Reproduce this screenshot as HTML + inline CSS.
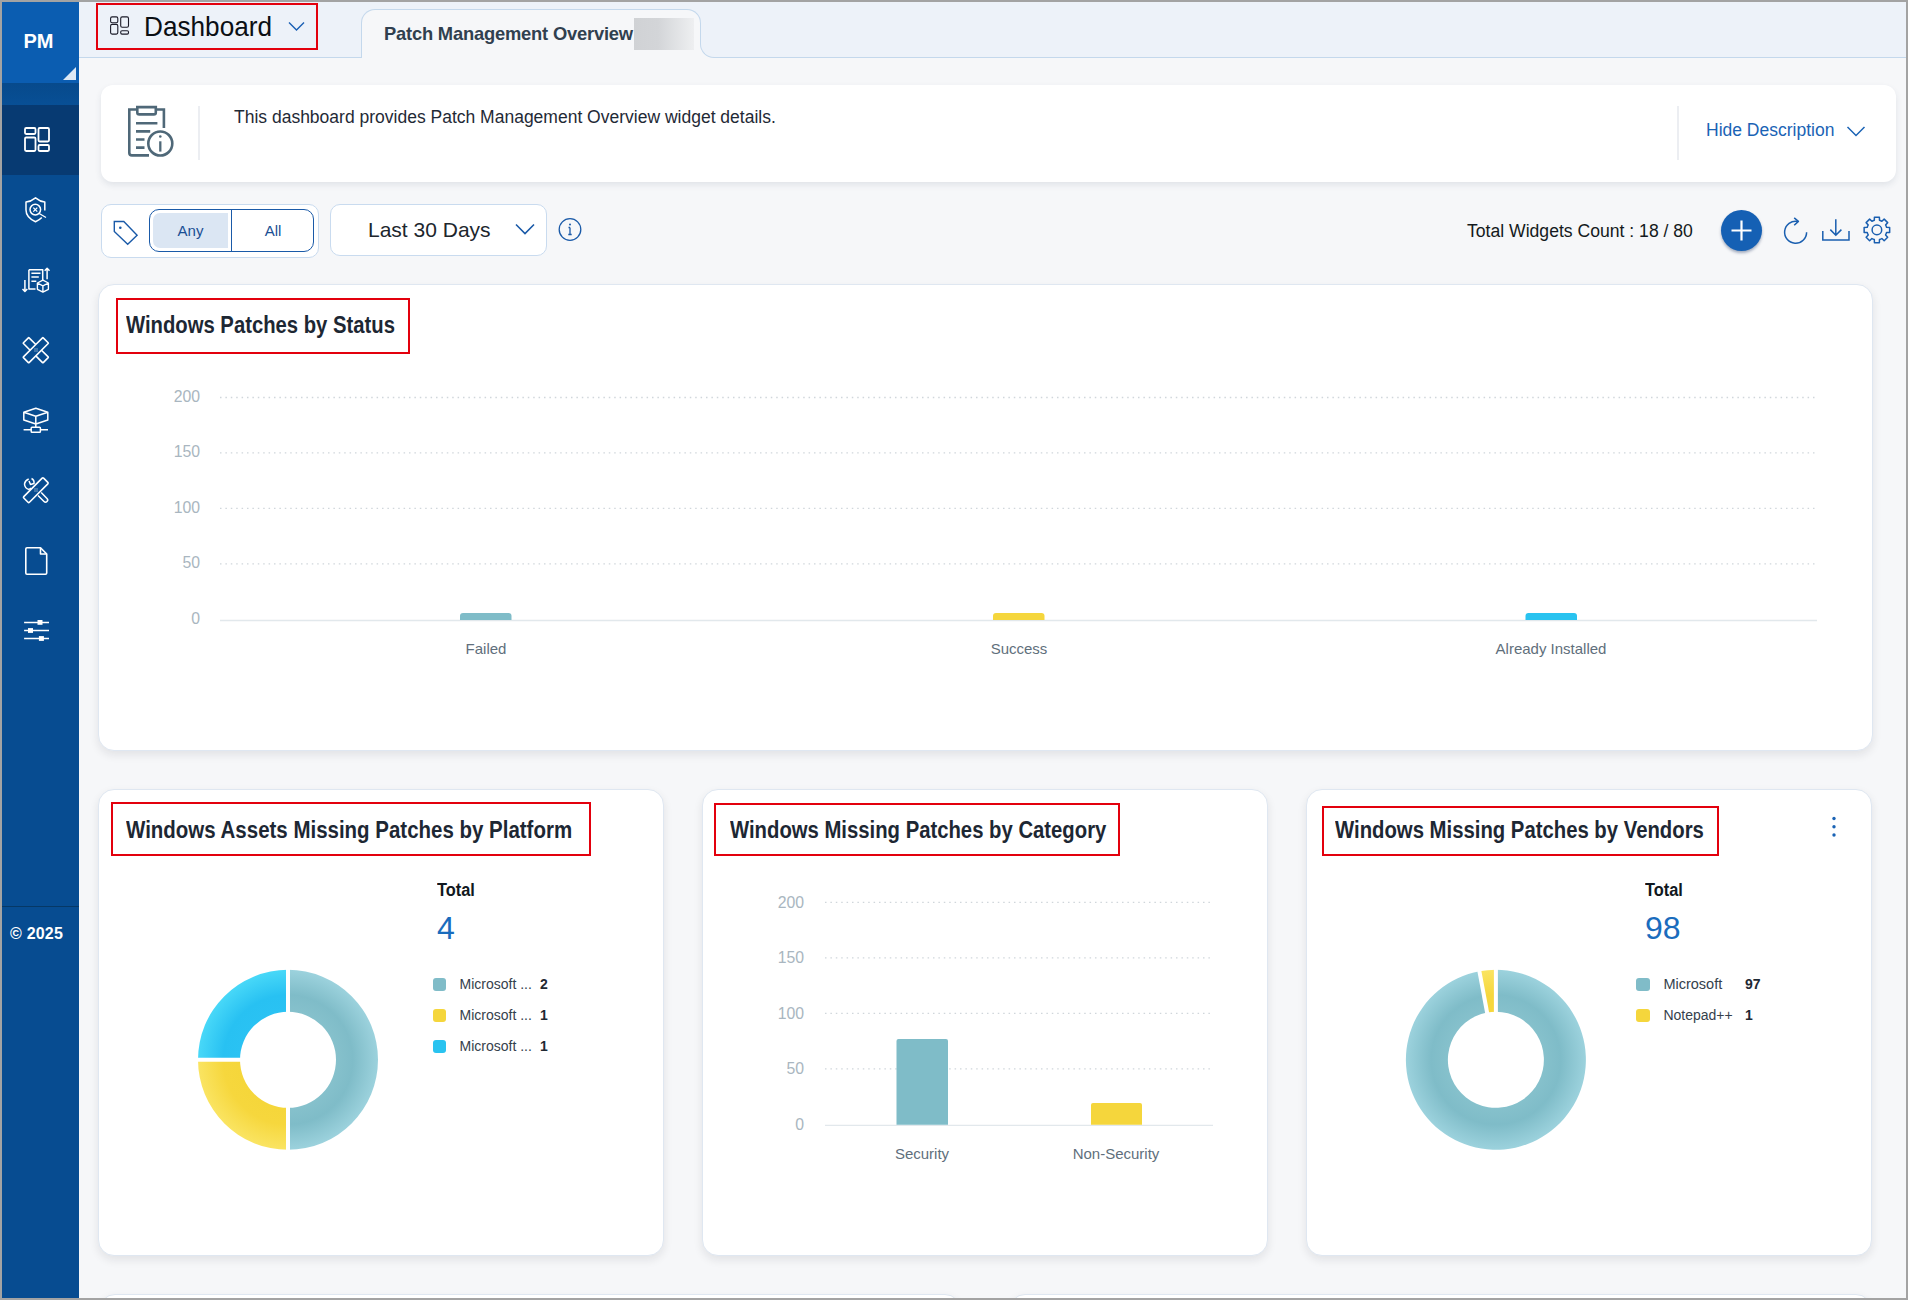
<!DOCTYPE html>
<html><head><meta charset="utf-8">
<style>
*{box-sizing:border-box;margin:0;padding:0}
html,body{width:1908px;height:1300px;overflow:hidden}
body{background:#f6f7f9;font-family:"Liberation Sans",sans-serif;position:relative}
.a{position:absolute}
.bd{position:absolute;background:#a3a3a3;z-index:50}
#side{position:absolute;left:2px;top:2px;width:77px;height:1296px;background:#074c91}
#pm{position:absolute;left:2px;top:2px;width:77px;height:81px;background:#0b5db1;color:#fff;font-weight:bold;font-size:20px;text-align:center;line-height:78px;padding-right:4px}
#pmtri{position:absolute;left:63px;top:67px;width:0;height:0;border-left:13px solid transparent;border-bottom:13px solid #dce8f5}
#grad{position:absolute;left:2px;top:83px;width:77px;height:22px;background:linear-gradient(#074a8c,#084f95)}
#sel{position:absolute;left:2px;top:105px;width:77px;height:70px;background:#073a72}
.sic{position:absolute;left:20px;width:32px;height:32px}
#sdiv{position:absolute;left:2px;top:906px;width:77px;height:1px;background:#063866}
#copy{position:absolute;left:10px;top:925px;color:#fff;font-weight:bold;font-size:16px;letter-spacing:0.2px}
#hdr{position:absolute;left:79px;top:2px;width:1827px;height:56px;background:#edf2f9;border-bottom:1px solid #c4d8ec}
.red{position:absolute;border:2.6px solid #e3000d}
.card{position:absolute;background:#fff;border-radius:16px;border:1px solid #dfe7f1;box-shadow:0 4px 10px rgba(20,25,35,0.09)}
.ttl{position:absolute;font-weight:bold;font-size:23px;transform-origin:0 0;color:#1d2733;white-space:nowrap}
.ylab{position:absolute;font-size:15.8px;color:#a9b6c0;text-align:right;width:40px}
.xlab{position:absolute;font-size:15px;color:#5f6f7c;text-align:center;width:200px}
.lsq{width:13.5px;height:13.5px;border-radius:3px}
.ltx{font-size:14px;color:#35414c;white-space:nowrap}
.lvl{font-size:14px;font-weight:bold;color:#1f2933}
.grid{position:absolute;height:0;border-top:2px dotted #d3d9de}
</style></head>
<body>
  <div id="side"></div>
  <div id="pm">PM</div>
  <div id="pmtri"></div>
  <div id="grad"></div>
  <div id="sel"></div>
  <div id="sdiv"></div>
  <div id="copy">© 2025</div>
  <svg class="a" style="left:0;top:0" width="79" height="680" viewBox="0 0 79 680" fill="none" stroke="#fff" stroke-width="1.8" stroke-linejoin="round">
    <!-- dashboard -->
    <rect x="25" y="128" width="10.5" height="6" rx="1.2"/>
    <rect x="25" y="137.5" width="10.5" height="13.5" rx="1.2"/>
    <rect x="38.5" y="128" width="10.5" height="13.5" rx="1.2"/>
    <rect x="38.5" y="145" width="10.5" height="6" rx="1.2"/>
    <!-- shield -->
    <path d="M44.8 210.5 V202 Q40 201.5 35.5 197.8 Q31 201.5 26 202 V210 Q26 217.5 35.5 221.7 Q39.5 220 41.8 217.5" stroke-width="1.5"/>
    <circle cx="35.3" cy="209.6" r="5.3" stroke-width="1.5"/>
    <path d="M33.3 207.6 L37.3 211.6 M37.3 207.6 L33.3 211.6 M39.2 213.5 L46 217.5" stroke-width="1.3"/>
    <!-- deploy doc -->
    <path d="M28.9 269.8 H42.7 V280 M35.5 289 H28.9 V269.8" stroke-width="1.5"/>
    <path d="M31.4 273.3 H40.5 M31.4 277.1 H38.8 M31.4 281.2 H36.3" stroke-width="1.5"/>
    <path d="M24.9 280 V291.5 M22.5 289 L24.9 291.5 L27.3 289 M47.1 279.3 V268.3 M44.7 270.7 L47.1 268.3 L49.5 270.7" stroke-width="1.5"/>
    <path d="M42.9 280.2 L48.4 283 V289.3 L42.9 292.1 L37.4 289.3 V283 Z M37.4 283 L42.9 285.8 L48.4 283 M42.9 285.8 V292.1" stroke-width="1.4"/>
    <!-- bandage -->
    <g transform="translate(35.8 350.2) rotate(45)">
      <path d="M-4 -4 H-13.5 Q-14 -4 -14 -3.5 V3.5 Q-14 4 -13.5 4 H-4 M4 -4 H13.5 Q14 -4 14 -3.5 V3.5 Q14 4 13.5 4 H4" stroke-width="1.6"/>
      <path d="M-4 -4 V-13.5 Q-4 -14 -3.5 -14 H3.5 Q4 -14 4 -13.5 V13.5 Q4 14 3.5 14 H-3.5 Q-4 14 -4 13.5 Z" stroke-width="1.6"/>
    </g>
    <path d="M34.5 349 h1 M36.5 351 h1 M34.5 351 h1 M36.5 349 h1" stroke-width="0.9"/>
    <!-- cube network -->
    <path d="M35.8 408.3 L47.8 412.3 V420 L35.8 424 L23.8 420 V412.3 Z M23.8 412.3 L35.8 416.3 L47.8 412.3 M35.8 416.3 V427.5" stroke-width="1.5"/>
    <path d="M23.6 429.8 H31.2 M40.4 429.8 H48" stroke-width="1.5"/>
    <rect x="31.2" y="427.3" width="9.2" height="5" rx="0.8" stroke-width="1.5"/>
    <!-- wrench + bandage -->
    <g transform="translate(35.8 490.2) rotate(-45)">
      <rect x="-14" y="-4" width="28" height="8" rx="1" stroke-width="1.6"/>
    </g>
    <path d="M38 495.5 L44 501.5 Q45.5 503 47 501.5 Q48.5 500 47 498.5 L41.2 492.5" stroke-width="1.5"/>
    <path d="M28.7 479 Q25 480.5 24.5 484 Q24.8 488.5 29 489.5 L31 488 M31.5 478.5 Q34.5 480 34 483.5 L30.5 484.5 L29 481" stroke-width="1.5"/>
    <path d="M34.5 489 h1 M36.5 491 h1 M34.5 491 h1 M36.5 489 h1" stroke-width="0.9"/>
    <!-- document -->
    <path d="M40.5 547.8 H27 Q25.8 547.8 25.8 549 V573 Q25.8 574.2 27 574.2 H45.5 Q46.7 574.2 46.7 573 V554 Z" stroke-width="1.6"/>
    <path d="M40.5 547.8 V554 H46.7" stroke-width="1.6"/>
    <!-- sliders -->
    <path d="M24.1 622.4 H49 M24.1 630.5 H49 M24.1 638.5 H49" stroke-width="1.5"/>
    <rect x="37.5" y="620" width="5" height="4.8" fill="#fff" stroke="none"/>
    <rect x="28" y="628.1" width="5" height="4.8" fill="#fff" stroke="none"/>
    <rect x="38.9" y="636.1" width="5" height="4.8" fill="#fff" stroke="none"/>
  </svg>
  <div id="hdr"></div>
  <!-- tab -->
  <div class="a" style="left:361px;top:9px;width:340px;height:49px;background:#f6f7f9;border:1px solid #c4d8ec;border-bottom:none;border-radius:14px 14px 0 0"></div>
  <div class="a" style="left:700px;top:44px;width:14px;height:14px;background:#f6f7f9"></div>
  <div class="a" style="left:700px;top:44px;width:14px;height:14px;background:#edf2f9;border-left:1px solid #c4d8ec;border-bottom:1px solid #c4d8ec;border-bottom-left-radius:14px"></div>
  <div class="a" style="left:362px;top:56px;width:338px;height:2px;background:#f6f7f9"></div>
  <div class="a" style="left:384px;top:23px;font-weight:bold;font-size:19px;letter-spacing:-0.2px;transform:scaleX(0.965);transform-origin:0 0;color:#30404f;white-space:nowrap">Patch Management Overview</div>
  <div class="a" style="left:634px;top:18px;width:60px;height:32px;background:linear-gradient(90deg,#d0d2d5,#d3d5d8 40%,#eeeff1)"></div>
  <!-- dashboard dropdown -->
  <div class="red" style="left:96px;top:3px;width:222px;height:47px"></div>
  <svg class="a" style="left:109px;top:15px" width="22" height="22" viewBox="0 0 22 22" fill="none" stroke="#1b1b28" stroke-width="1.1">
    <rect x="1.6" y="1.9" width="7.2" height="5.9" rx="1.5"/>
    <rect x="1.6" y="9.4" width="7.2" height="9.7" rx="1.5"/>
    <rect x="11.7" y="1.9" width="7.8" height="10.3" rx="1.5"/>
    <rect x="11.7" y="15.7" width="7.8" height="3.4" rx="1.3"/>
  </svg>
  <div class="a" style="left:144px;top:11px;font-size:28px;transform:scaleX(0.935);transform-origin:0 0;color:#0b0f14;white-space:nowrap">Dashboard</div>
  <svg class="a" style="left:288px;top:21px" width="17" height="11" viewBox="0 0 17 11" fill="none" stroke="#1a5fb4" stroke-width="1.4"><path d="M1 1.5 L8.5 9 L16 1.5"/></svg>

  <!-- description card -->
  <div class="a" style="left:101px;top:85px;width:1795px;height:97px;background:#fff;border-radius:12px;box-shadow:0 3px 6px rgba(40,60,90,0.10)"></div>
  <svg class="a" style="left:115px;top:95px" width="70" height="70" viewBox="0 0 70 70" fill="none" stroke="#4f6878" stroke-width="2.6">
    <path d="M21.5 14.5 H14.3 V58 Q14.3 60.4 17 60.4 H34"/>
    <path d="M42 14.5 H48.9 V33"/>
    <path d="M22.3 12.1 H40.8 V17.5 Q40.8 19.4 38.8 19.4 H24.3 Q22.3 19.4 22.3 17.5 Z"/>
    <path d="M21 28.3 H42.4 M21 36.4 H35.2 M21 44.5 H29.5 M21 52.6 H29.5"/>
    <circle cx="45.3" cy="48.5" r="12"/>
    <path d="M45.3 46.3 V56.6" stroke-width="2.3"/>
    <circle cx="45.3" cy="41.5" r="1.3" fill="#4f6878" stroke="none"/>
  </svg>
  <div class="a" style="left:198px;top:106px;width:2px;height:54px;background:#eceef2"></div>
  <div class="a" style="left:234px;top:107px;font-size:17.5px;color:#1f2a36;white-space:nowrap">This dashboard provides Patch Management Overview widget details.</div>
  <div class="a" style="left:1677px;top:106px;width:2px;height:54px;background:#eceef2"></div>
  <div class="a" style="left:1706px;top:120px;font-size:17.5px;color:#1a63b5;white-space:nowrap">Hide Description</div>
  <svg class="a" style="left:1846px;top:125px" width="20" height="13" viewBox="0 0 20 13" fill="none" stroke="#1a63b5" stroke-width="1.5"><path d="M1.5 2 L10 10.5 L18.5 2"/></svg>

  <!-- filter row -->
  <div class="a" style="left:101px;top:204px;width:218px;height:54px;background:#fff;border:1px solid #c9dbef;border-radius:10px"></div>
  <svg class="a" style="left:110px;top:216px" width="30" height="30" viewBox="0 0 30 30" fill="none" stroke="#1a5aa8" stroke-width="1.4" stroke-linejoin="miter">
    <path d="M4.3 5.5 H13.8 L27.1 19.3 L17.7 28.3 L4.3 15.4 Z"/>
    <circle cx="10.3" cy="11.7" r="1.3" fill="#1a5aa8" stroke="none"/>
  </svg>
  <div class="a" style="left:149px;top:209px;width:165px;height:43px;border:1.5px solid #1a5aa8;border-radius:10px;background:#fff"></div>
  <div class="a" style="left:153px;top:213px;width:75px;height:35px;background:#dbe6f3;border-radius:7px 0 0 7px"></div>
  <div class="a" style="left:231px;top:210px;width:1.2px;height:41px;background:#1a5aa8"></div>
  <div class="a" style="left:153px;top:222px;width:75px;text-align:center;font-size:15px;color:#1a4f94">Any</div>
  <div class="a" style="left:232px;top:222px;width:82px;text-align:center;font-size:15px;color:#1a4f94">All</div>
  <div class="a" style="left:330px;top:204px;width:217px;height:52px;background:#fff;border:1px solid #c9dbef;border-radius:10px"></div>
  <div class="a" style="left:368px;top:218px;font-size:21px;color:#20262d;white-space:nowrap">Last 30 Days</div>
  <svg class="a" style="left:514px;top:222px" width="22" height="14" viewBox="0 0 22 14" fill="none" stroke="#1a5aa8" stroke-width="1.6"><path d="M2 2.5 L11 11.5 L20 2.5"/></svg>
  <svg class="a" style="left:557px;top:217px" width="26" height="26" viewBox="0 0 26 26" fill="none" stroke="#1a5aa8" stroke-width="1.3">
    <circle cx="13" cy="12.5" r="10.8"/>
    <path d="M13 10.5 V17.5 M11.3 17.5 H14.7 M11.5 10.5 H13"/>
    <circle cx="13" cy="7.6" r="1" fill="#1a5aa8" stroke="none"/>
  </svg>
  <div class="a" style="left:1467px;top:221px;font-size:17.6px;color:#141a20;white-space:nowrap">Total Widgets Count : 18 / 80</div>
  <div class="a" style="left:1721px;top:210px;width:41px;height:41px;border-radius:50%;background:#1560b4;box-shadow:0 2px 3px rgba(0,30,80,0.35)"></div>
  <svg class="a" style="left:1721px;top:210px" width="41" height="41" viewBox="0 0 41 41" stroke="#fff" stroke-width="2.2"><path d="M20.5 10.5 V30.5 M10.5 20.5 H30.5"/></svg>
  <svg class="a" style="left:1770px;top:205px" width="140" height="50" viewBox="0 0 140 50" fill="none" stroke="#1a5fb0" stroke-width="1.5">
    <path d="M36.6 27.2 A11 11 0 1 1 27.6 16.4"/>
    <path d="M24.2 12.9 L28.4 16.4 L24.2 20.3" stroke-linejoin="round"/>
    <path d="M65.8 14.3 V30.3 M60.3 24.6 L65.8 30.2 L71.4 24.6"/>
    <path d="M52.8 26 V35 H79 V26"/>
    <path d="M104.31 15.24 L104.42 12.14 L109.38 12.14 L109.49 15.24 A10.0 10.0 0 0 1 111.90 16.24 L114.17 14.12 L117.68 17.63 L115.56 19.90 A10.0 10.0 0 0 1 116.56 22.31 L119.66 22.42 L119.66 27.38 L116.56 27.49 A10.0 10.0 0 0 1 115.56 29.90 L117.68 32.17 L114.17 35.68 L111.90 33.56 A10.0 10.0 0 0 1 109.49 34.56 L109.38 37.66 L104.42 37.66 L104.31 34.56 A10.0 10.0 0 0 1 101.90 33.56 L99.63 35.68 L96.12 32.17 L98.24 29.90 A10.0 10.0 0 0 1 97.24 27.49 L94.14 27.38 L94.14 22.42 L97.24 22.31 A10.0 10.0 0 0 1 98.24 19.90 L96.12 17.63 L99.63 14.12 L101.90 16.24 A10.0 10.0 0 0 1 104.31 15.24 Z" stroke-linejoin="round"/>
    <circle cx="106.9" cy="24.9" r="4.8"/>
  </svg>

  <!-- card 1 -->
  <div class="card" style="left:98px;top:284px;width:1775px;height:467px"></div>
  <div class="red" style="left:116px;top:298px;width:294px;height:56px"></div>
  <div class="ttl" style="left:126px;top:312px;transform:scaleX(0.881)">Windows Patches by Status</div>
  <svg class="a" style="left:0;top:0" width="1908" height="760" viewBox="0 0 1908 760">
    <g stroke="#d0d6db" stroke-width="1.3" stroke-dasharray="1.5 3.9">
      <path d="M220 397.5 H1815 M220 452.8 H1815 M220 508.3 H1815 M220 563.8 H1815"/>
    </g>
    <path d="M220 620.5 H1817" stroke="#e2e8ec" stroke-width="1.3"/>
    <path d="M460 620 V616 Q460 613 463 613 H508.5 Q511.5 613 511.5 616 V620 Z" fill="#7fbcc8"/>
    <path d="M993 620 V616 Q993 613 996 613 H1041.5 Q1044.5 613 1044.5 616 V620 Z" fill="#f5d63c"/>
    <path d="M1525.5 620 V616 Q1525.5 613 1528.5 613 H1574 Q1577 613 1577 616 V620 Z" fill="#29c3f0"/>
  </svg>
  <div class="ylab" style="left:160px;top:388px">200</div>
  <div class="ylab" style="left:160px;top:443px">150</div>
  <div class="ylab" style="left:160px;top:499px">100</div>
  <div class="ylab" style="left:160px;top:554px">50</div>
  <div class="ylab" style="left:160px;top:610px">0</div>
  <div class="xlab" style="left:386px;top:640px">Failed</div>
  <div class="xlab" style="left:919px;top:640px">Success</div>
  <div class="xlab" style="left:1451px;top:640px">Already Installed</div>

  <!-- row 2 cards -->
  <div class="card" style="left:98px;top:789px;width:566px;height:467px"></div>
  <div class="card" style="left:702px;top:789px;width:566px;height:467px"></div>
  <div class="card" style="left:1306px;top:789px;width:566px;height:467px"></div>
  <!-- row 3 partial -->
  <div class="card" style="left:99px;top:1294px;width:862px;height:300px"></div>
  <div class="card" style="left:1009px;top:1294px;width:863px;height:300px"></div>

  <div class="red" style="left:111px;top:802px;width:480px;height:54px"></div>
  <div class="ttl" style="left:126px;top:817px;transform:scaleX(0.89)">Windows Assets Missing Patches by Platform</div>
  <div class="red" style="left:714px;top:803px;width:406px;height:53px"></div>
  <div class="ttl" style="left:730px;top:817px;transform:scaleX(0.882)">Windows Missing Patches by Category</div>
  <div class="red" style="left:1322px;top:806px;width:397px;height:50px"></div>
  <div class="ttl" style="left:1335px;top:817px;transform:scaleX(0.883)">Windows Missing Patches by Vendors</div>
  <svg class="a" style="left:1828px;top:814px" width="12" height="26" viewBox="0 0 12 26" fill="#1a63b5"><circle cx="6" cy="4.5" r="1.7"/><circle cx="6" cy="12.8" r="1.7"/><circle cx="6" cy="21" r="1.7"/></svg>

  <!-- category bar chart -->
  <svg class="a" style="left:0;top:880px" width="1908" height="260" viewBox="0 880 1908 260">
    <g stroke="#d0d6db" stroke-width="1.3" stroke-dasharray="1.5 3.9">
      <path d="M825 902.4 H1211 M825 957.9 H1211 M825 1013.4 H1211 M825 1068.9 H1211"/>
    </g>
    <path d="M825 1125.3 H1213" stroke="#e2e8ec" stroke-width="1.3"/>
    <path d="M896.5 1124.8 V1041 Q896.5 1039 898.5 1039 H946 Q948 1039 948 1041 V1124.8 Z" fill="#7fbcc8"/>
    <path d="M1091 1124.8 V1105 Q1091 1103 1093 1103 H1140 Q1142 1103 1142 1105 V1124.8 Z" fill="#f5d63c"/>
  </svg>
  <div class="ylab" style="left:764px;top:894px">200</div>
  <div class="ylab" style="left:764px;top:949px">150</div>
  <div class="ylab" style="left:764px;top:1005px">100</div>
  <div class="ylab" style="left:764px;top:1060px">50</div>
  <div class="ylab" style="left:764px;top:1116px">0</div>
  <div class="xlab" style="left:822px;top:1145px">Security</div>
  <div class="xlab" style="left:1016px;top:1145px">Non-Security</div>

  <svg class="a" style="left:0;top:940px" width="1908" height="240" viewBox="0 940 1908 240">
  <defs>
  <radialGradient id="gT1" gradientUnits="userSpaceOnUse" cx="288" cy="1059.8" r="90"><stop offset="0.53" stop-color="#86c1cc"/><stop offset="0.72" stop-color="#7fbcc8"/><stop offset="1" stop-color="#9cd2dd"/></radialGradient>
  <radialGradient id="gY1" gradientUnits="userSpaceOnUse" cx="288" cy="1059.8" r="90"><stop offset="0.53" stop-color="#f5d63a"/><stop offset="0.72" stop-color="#f6d73d"/><stop offset="1" stop-color="#fae462"/></radialGradient>
  <radialGradient id="gC1" gradientUnits="userSpaceOnUse" cx="288" cy="1059.8" r="90"><stop offset="0.53" stop-color="#2ac2f3"/><stop offset="0.72" stop-color="#28c1f2"/><stop offset="1" stop-color="#48d8f8"/></radialGradient>
  <radialGradient id="gT2" gradientUnits="userSpaceOnUse" cx="1495.9" cy="1059.8" r="90"><stop offset="0.53" stop-color="#86c1cc"/><stop offset="0.72" stop-color="#7fbcc8"/><stop offset="1" stop-color="#9cd2dd"/></radialGradient>
  <radialGradient id="gY2" gradientUnits="userSpaceOnUse" cx="1495.9" cy="1059.8" r="90"><stop offset="0.53" stop-color="#f6d73d"/><stop offset="0.72" stop-color="#f6d73d"/><stop offset="1" stop-color="#fae462"/></radialGradient>
  </defs>
  <path d="M288.00 969.80 A90 90 0 0 1 288.00 1149.80 L288.00 1107.80 A48 48 0 0 0 288.00 1011.80 Z" fill="url(#gT1)"/>
  <path d="M288.00 1149.80 A90 90 0 0 1 198.00 1059.80 L240.00 1059.80 A48 48 0 0 0 288.00 1107.80 Z" fill="url(#gY1)"/>
  <path d="M198.00 1059.80 A90 90 0 0 1 288.00 969.80 L288.00 1011.80 A48 48 0 0 0 240.00 1059.80 Z" fill="url(#gC1)"/>
  <g stroke="#fff" stroke-width="4">
  <path d="M288.00 1013.80 L288.00 967.80"/>
  <path d="M288.00 1105.80 L288.00 1151.80"/>
  <path d="M242.00 1059.80 L196.00 1059.80"/>
  </g>
  <path d="M1495.90 969.80 A90 90 0 1 1 1479.42 971.32 L1487.11 1012.61 A48 48 0 1 0 1495.90 1011.80 Z" fill="url(#gT2)"/>
  <path d="M1479.42 971.32 A90 90 0 0 1 1495.90 969.80 L1495.90 1011.80 A48 48 0 0 0 1487.11 1012.61 Z" fill="url(#gY2)"/>
  <g stroke="#fff" stroke-width="4">
  <path d="M1495.90 1013.80 L1495.90 967.80"/>
  <path d="M1487.48 1014.58 L1479.06 969.36"/>
  </g>
  </svg>
  <!-- donut legends -->
  <div class="a" style="left:437px;top:880px;font-weight:bold;font-size:18px;color:#111820;transform:scaleX(0.91);transform-origin:0 0">Total</div>
  <div class="a" style="left:437px;top:910px;font-size:32px;color:#1a6cbd">4</div>
  <div class="a lsq" style="left:432.5px;top:977.5px;background:#80bcc8"></div>
  <div class="a lsq" style="left:432.5px;top:1008.5px;background:#f5d63c"></div>
  <div class="a lsq" style="left:432.5px;top:1039.5px;background:#29c3f0"></div>
  <div class="a ltx" style="left:459.5px;top:976px">Microsoft ...</div>
  <div class="a ltx" style="left:459.5px;top:1007px">Microsoft ...</div>
  <div class="a ltx" style="left:459.5px;top:1038px">Microsoft ...</div>
  <div class="a lvl" style="left:540px;top:976px">2</div>
  <div class="a lvl" style="left:540px;top:1007px">1</div>
  <div class="a lvl" style="left:540px;top:1038px">1</div>

  <div class="a" style="left:1645px;top:880px;font-weight:bold;font-size:18px;color:#111820;transform:scaleX(0.91);transform-origin:0 0">Total</div>
  <div class="a" style="left:1645px;top:910px;font-size:32px;color:#1a6cbd">98</div>
  <div class="a lsq" style="left:1636px;top:977.5px;background:#80bcc8"></div>
  <div class="a lsq" style="left:1636px;top:1008.5px;background:#f5d63c"></div>
  <div class="a ltx" style="left:1663.4px;top:976px;font-size:14.5px">Microsoft</div>
  <div class="a ltx" style="left:1663.4px;top:1007px">Notepad++</div>
  <div class="a lvl" style="left:1745px;top:976px">97</div>
  <div class="a lvl" style="left:1745px;top:1007px">1</div>

  <div class="bd" style="left:0;top:0;width:1908px;height:2px"></div>
  <div class="bd" style="left:0;top:1298px;width:1908px;height:2px"></div>
  <div class="bd" style="left:0;top:0;width:2px;height:1300px"></div>
  <div class="bd" style="left:1906px;top:0;width:2px;height:1300px"></div>
</body></html>
